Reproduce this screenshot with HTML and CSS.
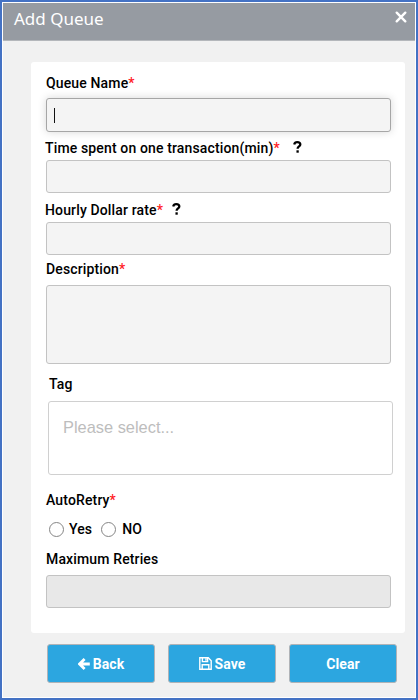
FILE: index.html
```html
<!DOCTYPE html>
<html lang="en">
<head>
<meta charset="utf-8">
<title>Add Queue</title>
<link rel="stylesheet" href="styles.css">
</head>
<body>
<div class="dialog">
  <header class="header">
    <h1 class="title">Add Queue</h1>
    <svg class="close" viewBox="0 0 12 12"><path d="M1.7 1.7 10.3 10.3M10.3 1.7 1.7 10.3"/></svg>
  </header>
  <main class="card">
    <div class="label"><span>Queue Name</span><span class="req">*</span></div>
    <div class="input focused"><span class="caret"></span></div>
    <div class="label time"><span>Time spent on one transaction(min)</span><span class="req">*</span>
      <svg class="help" viewBox="0 0 9 12"><path d="M1.2 3.5C1.6 2 2.7 1.2 4.2 1.2 6 1.2 7.3 2.1 7.3 3.6 7.3 5.5 4.6 5.4 4.6 7.7"/><path d="M4.6 9.3V11.7"/></svg></div>
    <div class="input"></div>
    <div class="label rate"><span>Hourly Dollar rate</span><span class="req">*</span>
      <svg class="help near" viewBox="0 0 9 12"><path d="M1.2 3.5C1.6 2 2.7 1.2 4.2 1.2 6 1.2 7.3 2.1 7.3 3.6 7.3 5.5 4.6 5.4 4.6 7.7"/><path d="M4.6 9.3V11.7"/></svg></div>
    <div class="input"></div>
    <div class="label desc"><span>Description</span><span class="req">*</span></div>
    <div class="input area"></div>
    <div class="label tag">Tag</div>
    <div class="select">Please select...</div>
    <div class="label retry"><span>AutoRetry</span><span class="req">*</span></div>
    <div class="radios">
      <span class="radio"></span><span class="option">Yes</span>
      <span class="radio second"></span><span class="option">NO</span>
    </div>
    <div class="label max"><span>Maximum Retries</span></div>
    <div class="input disabled"></div>
  </main>
  <footer class="actions">
    <div class="button"><svg class="arrow" viewBox="0 0 12 12"><path d="M6.6 1 1.6 6 6.6 11M2 6H11.8"/></svg><span>Back</span></div>
    <div class="button"><svg class="disk" viewBox="0 0 13 13"><path d="M.8.8H9.3L12.2 3.7V12.2H.8Z"/><path d="M3.4 1V4.6H8.6V1M3.2 12V7.8H9.8V12"/><path d="M7 1.2V3.8"/></svg><span>Save</span></div>
    <div class="button"><span>Clear</span></div>
  </footer>
</div>
</body>
</html>
```
FILE: styles.css
```css
* { box-sizing: border-box; }
body { margin: 0; font-family: Roboto, sans-serif; }
.dialog {
  width: 418px; height: 700px;
  border: 2px solid #4472c4;
  background: #f1f1f1;
  box-shadow: inset 0 0 0 1px #fff;
  padding: 1px;
}
.header {
  height: 38px;
  background: #969ba2;
  border-bottom: 1px solid #b4b7bb;
  display: flex; justify-content: space-between; align-items: flex-start;
  padding: 0 8px 0 11px;
}
.title { margin: 4px 0 0; font: 400 17px/24px "Noto Sans", sans-serif; color: #fff; }
.close { width: 12px; height: 12px; margin-top: 8px; fill: none; stroke: #fff; stroke-width: 2.4; stroke-linecap: round; }
.card {
  width: 374px; height: 571px;
  margin: 21px 0 0 28px;
  padding: 11px 14px 0 15px;
  background: #fff;
  border-radius: 3px;
}
.label {
  display: flex; align-items: center;
  height: 20px;
  font-size: 14px; font-weight: 500; line-height: 20px;
  letter-spacing: .14px;
  color: #000; white-space: nowrap;
}
.req { color: #ff1a24; }
.input {
  height: 33px;
  border: 1px solid #c3c3c3;
  border-radius: 3px;
  background: #f4f4f4;
}
.focused {
  height: 34px; margin-top: 5px;
  padding: 9px 0 0 7px;
  border-color: #a6a6a6;
  box-shadow: 0 0 8px rgba(0,0,0,.16);
}
.caret { display: block; width: 1px; height: 15px; background: #111; }
.time { margin: 6px 0 2px -1px; height: 20px; }
.rate { margin: 7px 0 2px -1px; }
.help { width: 9px; height: 12px; margin: -2px 0 0 13px; fill: none; stroke: #000; stroke-width: 2.3; }
.near { margin-left: 9px; }
.desc { margin: 4px 0 6px; }
.area { height: 79px; }
.tag { margin: 10px 0 7px 3px; }
.select {
  width: 345px; height: 74px;
  margin-left: 2px; padding: 14px;
  border: 1px solid #d0d0d0; border-radius: 3px;
  font: 16.4px/22px "Liberation Sans", sans-serif; color: #bdbdbd;
}
.retry { margin-top: 15px; }
.radios { display: flex; align-items: center; height: 20px; margin-top: 9px; padding-left: 3px; }
.radio { width: 15px; height: 15px; border: 1px solid #858585; border-radius: 50%; background: #fff; }
.second { margin-left: 9px; }
.option { margin-left: 5px; font-size: 14px; font-weight: 500; letter-spacing: .13px; color: #000; }
.second + .option { margin-left: 6px; }
.max { margin: 10px 0 6px; }
.disabled { background: #e8e8e8; }
.actions { display: flex; gap: 13px; margin: 11px 0 0 44px; }
.button {
  width: 108px; height: 39px;
  display: flex; align-items: center; justify-content: center;
  border: 1px solid #b0b3b7; border-radius: 3px;
  background: #2ca6e0;
  color: #fff; font-size: 14px; font-weight: 700; letter-spacing: .1px;
}
.arrow { width: 12px; height: 12px; margin-right: 3px; fill: none; stroke: #fff; stroke-width: 2.8; }
.disk { width: 13px; height: 13px; margin-right: 3px; fill: none; stroke: #fff; stroke-width: 1.4; }
```
